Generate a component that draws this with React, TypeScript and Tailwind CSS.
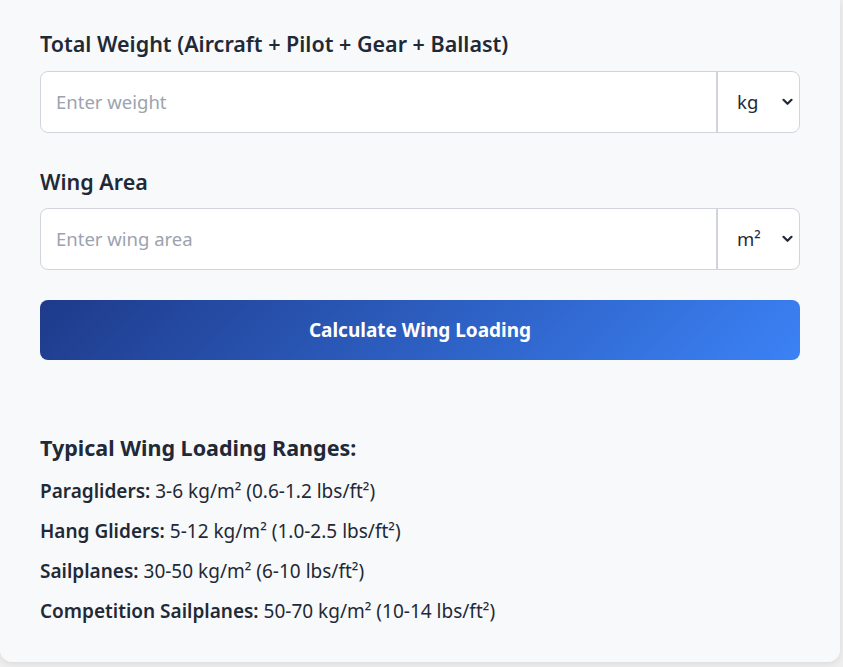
import { useState } from "react";

function Chevron() {
  return (
    <svg
      className="pointer-events-none absolute right-[6px] top-1/2 -translate-y-1/2"
      width="11"
      height="8"
      viewBox="0 0 11 8"
      fill="none"
    >
      <path d="M1.5 1.8 5.5 5.8 9.5 1.8" stroke="#1f2937" strokeWidth="2.2" strokeLinecap="round" strokeLinejoin="round" />
    </svg>
  );
}

function InputGroup({
  placeholder,
  value,
  onChange,
  unit,
  units,
  onUnit,
}: {
  placeholder: string;
  value: string;
  onChange: (v: string) => void;
  unit: string;
  units: string[];
  onUnit: (u: string) => void;
}) {
  return (
    <div className="flex h-[62px] rounded-lg border border-[#d1d5db] bg-white">
      <input
        type="number"
        placeholder={placeholder}
        value={value}
        onChange={(e) => onChange(e.target.value)}
        className="min-w-0 flex-1 rounded-l-lg bg-transparent px-[15px] text-[18.5px] text-[#1f2937] outline-none placeholder:text-[#9ca3af]"
      />
      <div className="relative w-[83px] border-l-2 border-[#d1d5db]">
        <select
          value={unit}
          onChange={(e) => onUnit(e.target.value)}
          className="h-full w-full appearance-none rounded-r-lg bg-transparent pl-[19px] text-[18.5px] text-[#1f2937] outline-none"
        >
          {units.map((u) => (
            <option key={u} value={u}>
              {u}
            </option>
          ))}
        </select>
        <Chevron />
      </div>
    </div>
  );
}

export default function App() {
  const [weight, setWeight] = useState("");
  const [area, setArea] = useState("");
  const [wUnit, setWUnit] = useState("kg");
  const [aUnit, setAUnit] = useState("m²");

  const ranges = [
    { name: "Paragliders:", text: "3-6 kg/m² (0.6-1.2 lbs/ft²)" },
    { name: "Hang Gliders:", text: "5-12 kg/m² (1.0-2.5 lbs/ft²)" },
    { name: "Sailplanes:", text: "30-50 kg/m² (6-10 lbs/ft²)" },
    { name: "Competition Sailplanes:", text: "50-70 kg/m² (10-14 lbs/ft²)" },
  ];

  return (
    <div className="min-h-[667px] bg-[#eeeeee] text-[#1f2937]" style={{ fontFamily: '"Noto Sans", "Open Sans", sans-serif' }}>
      <div className="w-[840px] rounded-b-xl bg-[#f8f9fa] px-[40px] pb-[39px] pt-[30px] shadow-[0_2px_6px_rgba(0,0,0,0.08)]">
        <label className="mb-[13px] block text-[21.5px] font-semibold leading-[28px]">
          Total Weight (Aircraft + Pilot + Gear + Ballast)
        </label>
        <InputGroup
          placeholder="Enter weight"
          value={weight}
          onChange={setWeight}
          unit={wUnit}
          units={["kg", "lbs"]}
          onUnit={setWUnit}
        />

        <label className="mb-[12px] mt-[35px] block text-[21.5px] font-semibold leading-[28px]">Wing Area</label>
        <InputGroup
          placeholder="Enter wing area"
          value={area}
          onChange={setArea}
          unit={aUnit}
          units={["m²", "ft²"]}
          onUnit={setAUnit}
        />

        <button
          type="button"
          className="mt-[30px] flex h-[60px] w-full items-center justify-center rounded-lg bg-[linear-gradient(135deg,#1e3a8a,#3b82f6)] text-[19px] font-bold text-white"
        >
          Calculate Wing Loading
        </button>

        <h3 className="mb-[17px] mt-[74px] text-[21.5px] font-bold leading-[28px]">Typical Wing Loading Ranges:</h3>
        <div className="flex flex-col gap-[16px]">
          {ranges.map((r) => (
            <p key={r.name} className="text-[19px] leading-[24px]">
              <span className="font-semibold">{r.name}</span> {r.text}
            </p>
          ))}
        </div>
      </div>
    </div>
  );
}
